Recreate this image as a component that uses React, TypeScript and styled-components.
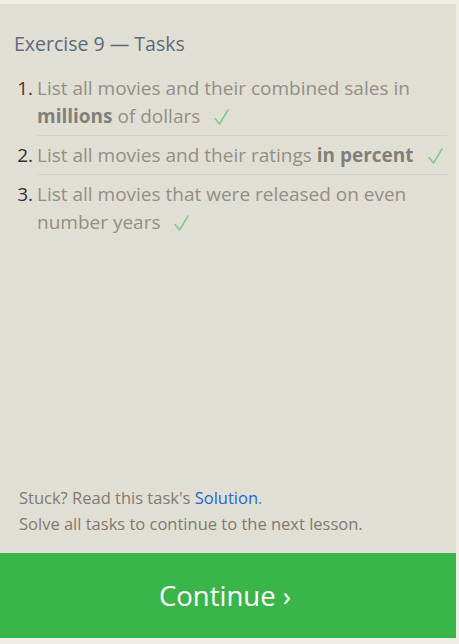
import React from "react";
import styled, { createGlobalStyle } from "styled-components";

const Global = createGlobalStyle`
  html, body { margin: 0; padding: 0; background: #eeede6; }
  body { font-family: "Open Sans", "Noto Sans", sans-serif; }
`;

const Page = styled.div`
  width: 456px;
  height: 644px;
  display: flex;
  flex-direction: column;
  padding-top: 4px;
  box-sizing: border-box;
`;

const Panel = styled.div`
  background: #e1dfd4;
  flex: 1;
  display: flex;
  flex-direction: column;
  padding: 27px 9px 0 14px;
`;

const Title = styled.h2`
  margin: 0 0 12px;
  font-size: 19.5px;
  font-weight: 400;
  color: #5d6a7c;
  line-height: 26px;
`;

const List = styled.ol`
  margin: 0;
  padding: 0;
  list-style: none;
`;

const Item = styled.li`
  display: flex;
  padding: 5px 0;
  & + & { border-top: 1px solid #d3d1c6; margin-left: 23px; }
  & + & > span:first-child { margin-left: -23px; }
`;

const Num = styled.span<{ $active?: boolean }>`
  width: 19px;
  margin-right: 4px;
  flex: none;
  text-align: right;
  font-size: 19px;
  line-height: 28px;
  color: ${(p) => (p.$active ? "#5b2a1f" : "#2f2f3a")};
`;

const Text = styled.span`
  font-size: 19px;
  line-height: 28px;
  color: #908f88;
  b { font-weight: 700; color: #807f79; }
`;

const CheckIcon = styled.svg`
  display: inline-block;
  width: 15px;
  height: 16px;
  margin-left: 14px;
  vertical-align: -2px;
`;

const Check = () => (
  <CheckIcon viewBox="0 0 15 16" aria-label="done">
    <polyline points="1,9.5 5.5,15 14,1" fill="none" stroke="#7fcb8b" strokeWidth="1.5" strokeLinecap="round" strokeLinejoin="round" />
  </CheckIcon>
);

const Spacer = styled.div`
  flex: 1;
`;

const Footer = styled.div`
  padding: 0 0 16px 5px;
  font-size: 16.5px;
  line-height: 26px;
  color: #7f7a73;
  a { color: #2864d6; text-decoration: none; }
`;

const ContinueButton = styled.button`
  height: 85px;
  border: none;
  background: #3ab54a;
  color: #ffffff;
  font-family: "Open Sans", "Noto Sans", sans-serif;
  font-size: 27.5px;
  margin-bottom: 6px;
  padding: 0 6px 0 0;
  width: 100%;
  cursor: pointer;
`;

export default function App() {
  return (
    <>
      <Global />
      <Page>
        <Panel>
          <Title>Exercise 9 — Tasks</Title>
          <List>
            <Item>
              <Num $active>1.</Num>
              <Text>
                List all movies and their combined sales in <b>millions</b> of dollars<Check />
              </Text>
            </Item>
            <Item>
              <Num>2.</Num>
              <Text>
                List all movies and their ratings <b>in percent</b><Check />
              </Text>
            </Item>
            <Item>
              <Num>3.</Num>
              <Text>
                List all movies that were released on even number years<Check />
              </Text>
            </Item>
          </List>
          <Spacer />
          <Footer>
            Stuck? Read this task's <a href="#">Solution</a>.
            <br />
            Solve all tasks to continue to the next lesson.
          </Footer>
        </Panel>
        <ContinueButton>Continue ›</ContinueButton>
      </Page>
    </>
  );
}
